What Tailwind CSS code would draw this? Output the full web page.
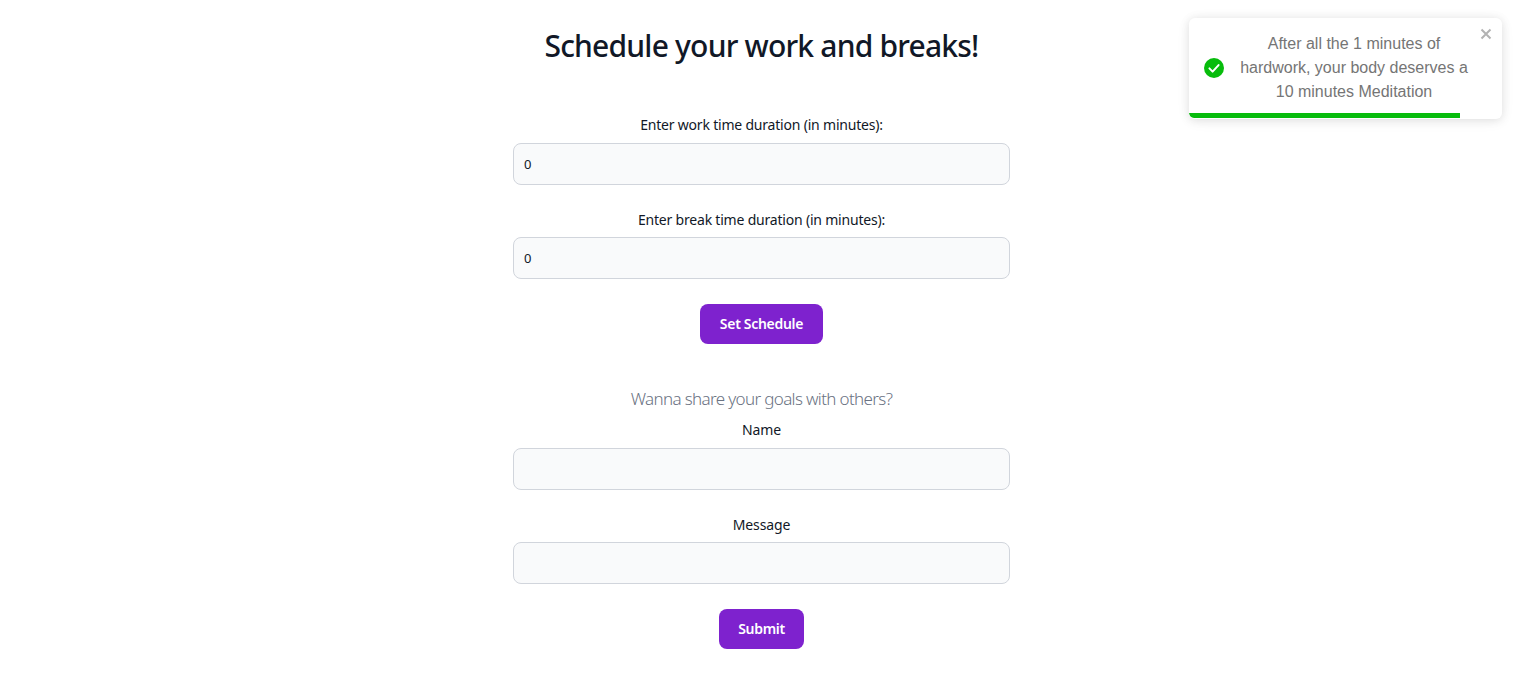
<!DOCTYPE html>
<html>

<head>
  <meta charset="UTF-8" />
  <title>Schedule</title>
  <script src="https://cdn.jsdelivr.net/npm/@tailwindcss/browser@4"></script>
</head>

<body class="bg-white h-[685px] overflow-hidden font-['Noto_Sans','Open_Sans',sans-serif]">
  <div class="w-[497px] ml-[513px] flex flex-col items-center">
    <h1 class="mt-[24px] h-[44px] leading-[44px] text-[30px] font-medium text-[#111827] whitespace-nowrap tracking-[-0.8px]">Schedule your work and breaks!</h1>

    <label class="mt-[47px] h-[20px] leading-[20px] text-[14px] text-[#111827] tracking-[-0.2px]">Enter work time duration (in minutes):</label>
    <input type="text" value="0" class="mt-[8px] w-full h-[42px] px-[10px] text-[13px] text-[#111827] bg-gray-50 border border-gray-300 rounded-lg" />

    <label class="mt-[25px] h-[20px] leading-[20px] text-[14px] text-[#111827] tracking-[-0.2px]">Enter break time duration (in minutes):</label>
    <input type="text" value="0" class="mt-[7px] w-full h-[42px] px-[10px] text-[13px] text-[#111827] bg-gray-50 border border-gray-300 rounded-lg" />

    <button class="mt-[25px] h-[40px] w-[123px] rounded-lg bg-[#7e22ce] text-white text-[14px] font-semibold tracking-[-0.3px] pb-[2px]">Set Schedule</button>

    <p class="mt-[43px] h-[24px] leading-[24px] text-[17px] font-light text-gray-500 tracking-[-0.65px]">Wanna share your goals with others?</p>
    <label class="mt-[9px] h-[20px] leading-[20px] text-[14px] text-[#111827] tracking-[-0.1px]">Name</label>
    <input type="text" class="mt-[8px] w-full h-[42px] px-[10px] text-[14px] bg-gray-50 border border-gray-300 rounded-lg" />

    <label class="mt-[25px] h-[20px] leading-[20px] text-[14px] text-[#111827] tracking-[-0.1px]">Message</label>
    <input type="text" class="mt-[7px] w-full h-[42px] px-[10px] text-[14px] bg-gray-50 border border-gray-300 rounded-lg" />

    <button class="mt-[25px] h-[40px] w-[85px] rounded-lg bg-[#7e22ce] text-white text-[14px] font-semibold tracking-[-0.3px] pb-[2px]">Submit</button>
  </div>

  <!-- toast -->
  <div class="absolute left-[1189px] top-[18px] w-[313px] h-[101px] bg-white rounded-[6px] shadow-[0_1px_10px_0_rgba(0,0,0,0.1),0_2px_15px_0_rgba(0,0,0,0.05)] overflow-hidden flex items-center pl-[15px] pr-[33px] pb-[2px]">
    <svg class="w-[20px] h-[20px] shrink-0" viewBox="0 0 24 24">
      <circle cx="12" cy="12" r="12" fill="#07bc0c" />
      <path d="M6.5 12.5l3.8 3.8 7.2-7.8" fill="none" stroke="#fff" stroke-width="2.4" stroke-linecap="round" stroke-linejoin="round" />
    </svg>
    <p class="ml-[15px] flex-1 text-center text-[16px] leading-[24px] text-[#757575] font-['Liberation_Sans',sans-serif]">After all the 1 minutes of hardwork, your body deserves a 10 minutes Meditation</p>
    <svg class="absolute right-[10px] top-[10px] w-[12px] h-[12px]" viewBox="0 0 12 12">
      <path d="M1.5 1.5l9 9M10.5 1.5l-9 9" stroke="#b3b3b3" stroke-width="2" />
    </svg>
    <div class="absolute left-0 bottom-[1px] h-[5px] w-[271px] rounded-bl-[6px] bg-[#07bc0c]"></div>
  </div>
</body>

</html>
